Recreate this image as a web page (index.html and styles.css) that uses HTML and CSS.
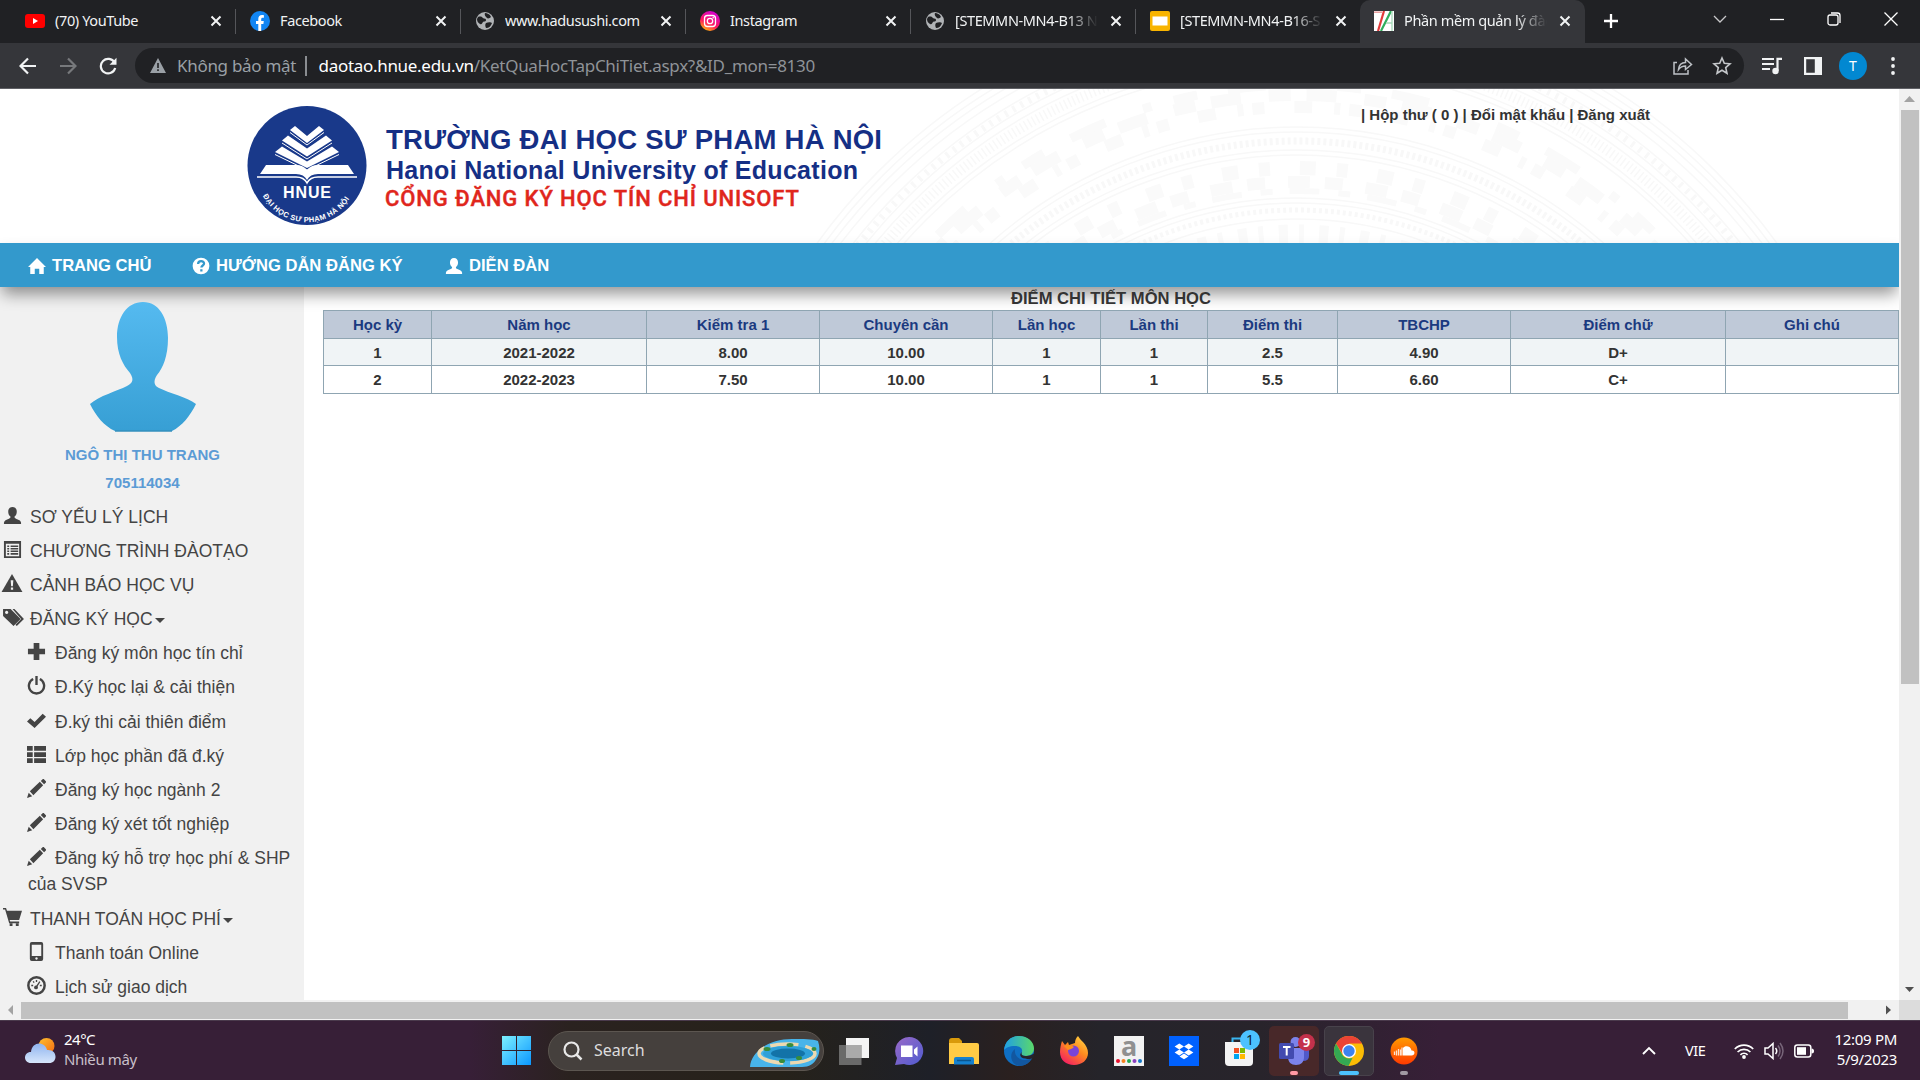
FILE: index.html
```html
<!DOCTYPE html>
<html lang="vi">
<head>
<meta charset="utf-8">
<title>Phần mềm quản lý đào tạo</title>
<link rel="stylesheet" href="styles.css">
</head>
<body>
<svg class="defs" width="0" height="0">
  <symbol id="close" viewBox="0 0 12 12"><path d="M1.5 1.5l9 9M10.500 1.500l-9 9" stroke="#f1f3f4" stroke-width="2" fill="none"/></symbol>
  <symbol id="globe" viewBox="0 0 20 20"><circle cx="10" cy="10" r="9" fill="#b0b3b6"/><path d="M3 6c3-1 4 0 5 1s3 0 3 2-2 1-3 2-1 3-3 2-3-3-3-5zM10 2c2 0 5 1 6 4-1 1-3 2-4 1s-3-3-2-5zM11 12c2-1 5-1 6 0-1 3-3 5-6 5-1-2-1-4 0-5z" fill="#202124"/></symbol>
  <symbol id="user" viewBox="0 0 20 20"><path d="M10 1c2.800 0 4.500 2 4.500 5 0 2.300-1 4.200-2.300 5.100-.3 1.200.3 1.700 1.500 2.200 2.600 1.100 5.300 2 5.300 4.200V19H1v-1.500c0-2.200 2.700-3.100 5.300-4.200 1.200-.5 1.800-1 1.500-2.200C6.500 10.200 5.500 8.300 5.500 6c0-3 1.700-5 4.500-5z"/></symbol>
  <symbol id="home" viewBox="0 0 20 20"><path d="M10 1l10 10h-2.500v8h-5v-6h-5v6h-5v-8H0z"/></symbol>
  <symbol id="question" viewBox="0 0 20 20"><circle cx="10" cy="10" r="9.300"/><path d="M6.800 7.800c0-4.300 6.600-4 6.600-.6 0 2.300-3 2.200-3 4.600M10.400 13.500v2.500" fill="none" stroke="#39c" stroke-width="2.500"/></symbol>
  <symbol id="listalt" viewBox="0 0 20 20"><path d="M1 1h18v18H1zM3 4v13h14V4z" fill-rule="evenodd"/><path d="M4.500 6.500h2m1.500 0h8M4.500 9.200h2m1.500 0h8M4.500 11.900h2m1.500 0h8M4.500 14.600h2m1.500 0h8" stroke="#444" stroke-width="1.600"/></symbol>
  <symbol id="warning" viewBox="0 0 22 20"><path d="M11 0l11 19H0z"/><path d="M9.600 6.500h2.800l-.5 6.500h-1.800zM9.800 14.200h2.400v2.300H9.800z" fill="#f1f1f1"/></symbol>
  <symbol id="tags" viewBox="0 0 24 20"><path d="M1 1h8l10.500 10.500-7.500 7.500L1 8.500zM4.800 3A1.700 1.700 0 1 0 4.810 3z" fill-rule="evenodd"/><path d="M11 1h2l10 10.500-7.500 7.500-1.500-1.500 6-6z"/></symbol>
  <symbol id="plus" viewBox="0 0 20 20"><path d="M7 1h6v6h6v6h-6v6H7v-6H1V7h6z"/></symbol>
  <symbol id="power" viewBox="0 0 20 20"><path d="M6.500 3.200a8 8 0 1 0 7 0M10 0v9.500" fill="none" stroke="#444" stroke-width="2.500"/></symbol>
  <symbol id="check" viewBox="0 0 20 20"><path d="M0 11l3.500-3.500L8 11.500 16.500 3 20 6 8 18z"/></symbol>
  <symbol id="thlist" viewBox="0 0 20 20"><path d="M0 1h6v5H0zM7.500 1H20v5H7.500zM0 7.500h6v5H0zM7.500 7.500H20v5H7.500zM0 14h6v5H0zM7.500 14H20v5H7.500z"/></symbol>
  <symbol id="pencil" viewBox="0 0 20 20"><path d="M0 20l1.800-5.500 3.700 3.700zM3 13L13.500 3 17 6.500 6.700 17zM14.500 2l1.700-1.500c.6-.6 1.300-.5 1.900 0l1.500 1.600c.6.600.6 1.300 0 1.900L18 5.500z"/></symbol>
  <symbol id="cart" viewBox="0 0 20 20"><path d="M0 0h3.200l1 3H20l-3 9.500H7l.6 1.800H17v1.700H6.500L2.200 1.700H0z"/><path d="M7 16h3v3H7zM13.500 16h3v3h-3z"/></symbol>
  <symbol id="phone" viewBox="0 0 20 20"><path d="M5 0h10q2 0 2 2v16q0 2-2 2H5q-2 0-2-2V2q0-2 2-2zM5 2.800v12h10v-12zM10 16a1.300 1.300 0 1 0 .010 0z" fill-rule="evenodd"/></symbol>
  <symbol id="gauge" viewBox="0 0 20 20"><circle cx="10" cy="10" r="8.600" fill="none" stroke="#444" stroke-width="2.600"/><path d="M4.500 10h2m7 0h2M6.500 5.700l1 1.200M10 4.300v1.900M9.500 12l4-6" stroke="#444" stroke-width="1.400"/><circle cx="9.500" cy="12" r="2"/></symbol>
</svg>

<header class="browser">
  <div class="tabs">
    <div class="tab"><svg class="fav" viewBox="0 0 20 20"><rect y="3" width="20" height="14" rx="3" fill="#f00"/><path d="M8 7l5 3-5 3z" fill="#fff"/></svg><span class="tt">(70) YouTube</span><svg class="x"><use href="#close"/></svg></div>
    <div class="tab"><svg class="fav" viewBox="0 0 20 20"><circle cx="10" cy="10" r="10" fill="#1185f3"/><path d="M8.300 20v-7H6v-3h2.300V8c0-2.600 1.500-4 3.700-4 1 0 1.900.2 1.900.2v2.500h-1.200c-1.200 0-1.500.7-1.500 1.400V10h2.600l-.4 3h-2.200v7z" fill="#fff"/></svg><span class="tt">Facebook</span><svg class="x"><use href="#close"/></svg></div>
    <div class="tab"><svg class="fav"><use href="#globe"/></svg><span class="tt">www.hadusushi.com</span><svg class="x"><use href="#close"/></svg></div>
    <div class="tab"><svg class="fav" viewBox="0 0 20 20"><defs><linearGradient id="ig" x1="0.200" y1="1" x2="0.700" y2="0"><stop offset="0" stop-color="#ffc800"/><stop offset=".4" stop-color="#ff1a5e"/><stop offset="1" stop-color="#d100d8"/></linearGradient></defs><circle cx="10" cy="10" r="10" fill="url(#ig)"/><rect x="4.500" y="4.500" width="11" height="11" rx="3" fill="none" stroke="#fff" stroke-width="1.300"/><circle cx="10" cy="10" r="2.700" fill="none" stroke="#fff" stroke-width="1.300"/><circle cx="13.200" cy="6.800" r=".8" fill="#fff"/></svg><span class="tt">Instagram</span><svg class="x"><use href="#close"/></svg></div>
    <div class="tab"><svg class="fav"><use href="#globe"/></svg><span class="tt fade">[STEMMN-MN4-B13 N</span><svg class="x"><use href="#close"/></svg></div>
    <div class="tab last"><svg class="fav" viewBox="0 0 20 20"><rect width="20" height="20" rx="2" fill="#f8b400"/><rect x="2.500" y="5.500" width="15" height="9" fill="#fff"/></svg><span class="tt fade">[STEMMN-MN4-B16-S</span><svg class="x"><use href="#close"/></svg></div>
    <div class="tab active"><svg class="fav" viewBox="0 0 20 20"><rect width="20" height="20" fill="#fff"/><path d="M0 1.200h8" stroke="#e9a0a0" stroke-width="1.500"/><path d="M10 0L4 20" fill="none" stroke="#e23b3b" stroke-width="2.200"/><path d="M17 0L7 20" stroke="#2fae5c" stroke-width="2.200"/><path d="M18 0v20M12 12h6" fill="none" stroke="#a5d9b7" stroke-width="1.300"/></svg><span class="tt fade">Phần mềm quản lý đào</span><svg class="x"><use href="#close"/></svg></div>
    <svg class="newtab" viewBox="0 0 16 16"><path d="M8 1v14M1 8h14" stroke="#fff" stroke-width="2.300"/></svg>
    <div class="winctl">
      <svg width="14" height="14" viewBox="0 0 14 14"><path d="M1 4l6 6 6-6" stroke="#c8c8ca"/></svg>
      <svg width="14" height="14" viewBox="0 0 14 14"><path d="M0 7.500h14"/></svg>
      <svg width="14" height="14" viewBox="0 0 14 14"><rect x="1" y="3" width="10" height="10" rx="2"/><path d="M4 1h6.500q2.500 0 2.500 2.500V11"/></svg>
      <svg width="14" height="14" viewBox="0 0 14 14"><path d="M.5.500l13 13M13.500.500l-13 13"/></svg>
    </div>
  </div>
  <div class="toolbar">
    <svg class="nv" viewBox="0 0 18 18"><path d="M17 9H2M9 1.500L1.500 9 9 16.500" stroke="#f1f3f4"/></svg>
    <svg class="nv" viewBox="0 0 18 18"><path d="M1 9h15M9 1.500L16.500 9 9 16.500" stroke="#77797c"/></svg>
    <svg class="nv" viewBox="0 0 18 18"><path d="M15.500 5.500A7.300 7.300 0 1 0 16.200 11" stroke="#f1f3f4"/><path d="M17.500.800v7h-7z" fill="#f1f3f4"/></svg>
    <div class="omni">
      <svg width="16" height="15" viewBox="0 0 16 15"><path d="M8 0l8 15H0z" fill="#9aa0a6"/><path d="M7.200 5h1.600v5H7.200zM7.200 11.300h1.600v1.700H7.200z" fill="#202124"/></svg>
      <span class="warn">Không bảo mật</span><i class="bar"></i><span class="url"><b>daotao.hnue.edu.vn</b>/KetQuaHocTapChiTiet.aspx?&amp;ID_mon=8130</span>
      <svg class="share" width="20" height="19" viewBox="0 0 20 19"><path d="M4 6.500H1V18h14v-4M5.500 13.500c.5-5 3-7 7-7V3l6 5.500-6 5v-3.500c-3 0-5 .8-7 3.500z" fill="none" stroke="#bdc1c6" stroke-width="1.500"/></svg>
      <svg class="star" width="20" height="19" viewBox="0 0 20 19"><path d="M10 2l2.300 5.300 5.700.5-4.300 3.800 1.300 5.700-5-3-5 3 1.300-5.700L2 7.800l5.700-.5z" fill="none" stroke="#c4c7ca" stroke-width="1.600"/></svg>
    </div>
    <svg class="media" width="20" height="18" viewBox="0 0 20 18"><path d="M0 2h12M0 7h12M0 12h8" stroke="#f1f3f4" stroke-width="2.200"/><path d="M15.500 14V1.800H20" stroke="#f1f3f4" stroke-width="2.200" fill="none"/><circle cx="13.500" cy="14" r="3.200" fill="#f1f3f4"/></svg>
    <svg class="panel" width="18" height="18" viewBox="0 0 18 18"><path d="M0 0h18v18H0zM2.200 2.200v13.600h8.600V2.200z" fill="#f1f3f4" fill-rule="evenodd"/></svg>
    <span class="ava">T</span>
    <svg class="dots" width="4" height="18" viewBox="0 0 4 18"><circle cx="2" cy="2" r="1.900"/><circle cx="2" cy="9" r="1.900"/><circle cx="2" cy="16" r="1.900"/></svg>
  </div>
</header>

<div class="view">
  <main class="page">
    <div class="banner">
      <svg width="1899" height="154" viewBox="0 89 1899 154">
        <g transform="translate(1297 590)" fill="none" stroke="#f8f8f8" stroke-width="1.500">
          <circle r="592"/><circle r="586"/><circle r="580"/><circle r="573"/>
          <circle r="563"/><circle r="558" stroke-width="7" stroke-dasharray="3 6"/><circle r="553"/><circle r="546"/>
          <circle r="538" stroke-width="10" stroke-dasharray="1.500 3"/><circle r="529"/><circle r="524"/>
          <g stroke="#fafafa">
            <circle r="505" stroke-width="9" stroke-dasharray="38 40 9 23 24 31"/>
            <circle r="495" stroke-width="12" stroke-dasharray="22 16 30 28"/>
            <circle r="483" stroke-width="12" stroke-dasharray="12 30 18 22 6 9"/>
          </g>
          <circle r="463"/><circle r="458"/><circle r="449" stroke-width="7" stroke-dasharray="3 3"/><circle r="440"/><circle r="435"/>
          <g stroke="#fafafa">
            <circle r="422" stroke-width="14" stroke-dasharray="11 30 16 21"/>
            <circle r="408" stroke-width="12" stroke-dasharray="18 23 22 15"/>
            <circle r="399" stroke-width="6" stroke-dasharray="30 19 12 17"/>
          </g>
          <circle r="392"/><circle r="387"/><circle r="380" stroke-width="5" stroke-dasharray="3 3"/><circle r="371"/>
          <circle r="352" stroke="#fafafa" stroke-width="27" stroke-dasharray="9 11 5 15"/>
        </g>
        <circle cx="307" cy="165.500" r="59.500" fill="#19398a"/>
        <g fill="#fff">
          <path d="M290 130l5-4 12 10 12-10 5 4-17 13z"/>
          <path d="M282 140.500l6-5 19 13 19-13 6 5-25 16z"/>
          <path d="M275 152l7-5.500 25 15 25-15 7 5.500-32 16z"/>
          <path d="M266 165h30q7 0 11 5 4-5 11-5h30l6 9h-36q-8 0-11 6-3-6-11-6h-36z"/>
        </g>
        <g fill="none" stroke="#fff" stroke-width="1">
          <path d="M290 132.500l17 12.500 17-12.500M282 143l25 16 25-16M275 154.500l32 15.500 32-15.500"/>
          <path d="M257 177h39q8 0 11 6 3-6 11-6h39" stroke-width="1.500"/>
        </g>
        <text x="283" y="198" class="hnue" textLength="48">HNUE</text>
        <path id="arc" d="M262.500 195a50 50 0 0 0 90-2" fill="none"/>
        <text class="ring"><textPath href="#arc" startOffset="1" textLength="104">ĐẠI HỌC SƯ PHẠM HÀ NỘI</textPath></text>
        <text x="386" y="149" class="l1" textLength="496">TRƯỜNG ĐẠI HỌC SƯ PHẠM HÀ NỘI</text>
        <text x="386" y="179" class="l2" textLength="472">Hanoi National University of Education</text>
        <text x="385" y="206" class="l3" textLength="414">CỔNG ĐĂNG KÝ HỌC TÍN CHỈ UNISOFT</text>
        <text x="1361" y="120" class="l4" textLength="289">| Hộp thư ( 0 ) | Đổi mật khẩu | Đăng xuất</text>
      </svg>
    </div>
    <nav class="menu">
      <a><svg><use href="#home"/></svg><span class="m1">TRANG CHỦ</span></a>
      <a><svg><use href="#question"/></svg><span class="m2">HƯỚNG DẪN ĐĂNG KÝ</span></a>
      <a><svg><use href="#user"/></svg><span class="m3">DIỄN ĐÀN</span></a>
    </nav>
    <div class="cols">
      <aside class="side">
        <svg class="avatar" width="108" height="134" viewBox="89 300 108 134"><defs><linearGradient id="av" x1="0" y1="0" x2="0" y2="1"><stop offset="0" stop-color="#55baf0"/><stop offset="1" stop-color="#379fd4"/></linearGradient></defs><path d="M143 302c16 0 25 16 25 36 0 18-5 30-11 37-4 6-3 11 2 13 10 5 28 9 37 16-6 12-14 22-24 27h-57c-11-5-19-15-25-27 9-8 27-13 37-18 6-3 7-7 3-13-7-8-13-19-13-36 0-20 10-35 26-35z" fill="url(#av)"/><path d="M115 431h57" stroke="#348fbd" stroke-width="1.500"/></svg>
        <p class="who">NGÔ THỊ THU TRANG</p>
        <p class="who">705114034</p>
        <ul class="list">
          <li><svg><use href="#user"/></svg>SƠ YẾU LÝ LỊCH</li>
          <li><svg><use href="#listalt"/></svg>CHƯƠNG TRÌNH ĐÀOTẠO</li>
          <li><svg class="tri"><use href="#warning"/></svg>CẢNH BÁO HỌC VỤ</li>
          <li><svg class="wide"><use href="#tags"/></svg>ĐĂNG KÝ HỌC<i class="caret"></i></li>
          <li class="sub"><svg><use href="#plus"/></svg>Đăng ký môn học tín chỉ</li>
          <li class="sub"><svg><use href="#power"/></svg>Đ.Ký học lại &amp; cải thiện</li>
          <li class="sub"><svg><use href="#check"/></svg>Đ.ký thi cải thiên điểm</li>
          <li class="sub"><svg><use href="#thlist"/></svg>Lớp học phần đã đ.ký</li>
          <li class="sub"><svg><use href="#pencil"/></svg>Đăng ký học ngành 2</li>
          <li class="sub"><svg><use href="#pencil"/></svg>Đăng ký xét tốt nghiệp</li>
          <li class="sub"><svg><use href="#pencil"/></svg>Đăng ký hỗ trợ học phí &amp; SHP<span class="wrap">của SVSP</span></li>
          <li><svg><use href="#cart"/></svg>THANH TOÁN HỌC PHÍ<i class="caret"></i></li>
          <li class="sub"><svg><use href="#phone"/></svg>Thanh toán Online</li>
          <li class="sub"><svg><use href="#gauge"/></svg>Lịch sử giao dịch</li>
        </ul>
      </aside>
      <section class="content">
        <h1>ĐIỂM CHI TIẾT MÔN HỌC</h1>
        <table>
          <colgroup><col class="c108"><col class="c215"><col class="c173"><col class="c173"><col class="c108"><col class="c107"><col class="c130"><col class="c173"><col class="c215"><col class="c173"></colgroup>
          <tr><th>Học kỳ</th><th>Năm học</th><th>Kiểm tra 1</th><th>Chuyên cần</th><th>Lần học</th><th>Lần thi</th><th>Điểm thi</th><th>TBCHP</th><th>Điểm chữ</th><th>Ghi chú</th></tr>
          <tr class="alt"><td>1</td><td>2021-2022</td><td>8.00</td><td>10.00</td><td>1</td><td>1</td><td>2.5</td><td>4.90</td><td>D+</td><td></td></tr>
          <tr><td>2</td><td>2022-2023</td><td>7.50</td><td>10.00</td><td>1</td><td>1</td><td>5.5</td><td>6.60</td><td>C+</td><td></td></tr>
        </table>
      </section>
    </div>
  </main>
  <div class="vs"><svg width="21" height="21"><path d="M5 13l5.500-6 5.500 6z" fill="#a3a3a3"/></svg><i class="vthumb"></i><svg class="dn" width="21" height="21"><path d="M6 8h9l-4.500 5z" fill="#505050"/></svg></div>
  <div class="hs"><svg width="21" height="20"><path d="M13 5v10l-5-5z" fill="#a3a3a3"/></svg><i class="hthumb"></i><svg class="rt" width="21" height="20"><path d="M8 5.500v9l5-4.500z" fill="#505050"/></svg></div>
  <div class="corner"></div>
</div>

<footer class="task">
  <div class="weather">
    <svg width="31" height="27" viewBox="0 0 31 27"><defs><linearGradient id="cl" x1="0" y1="0" x2="0" y2="1"><stop offset="0" stop-color="#8fb4ef"/><stop offset="1" stop-color="#d7e6fb"/></linearGradient><linearGradient id="su" x1="0" y1="0" x2="1" y2="1"><stop offset="0" stop-color="#ffc02e"/><stop offset="1" stop-color="#f26b12"/></linearGradient></defs><circle cx="21.500" cy="9" r="8" fill="url(#su)"/><path d="M6 26c-8 0-8-11 0-11C7 4 20 4 22 13c11-1 11 13 2 13z" fill="url(#cl)"/></svg>
    <div class="wtext"><span class="deg">24°C</span><span class="cloudy">Nhiều mây</span></div>
  </div>
  <svg class="win" width="30" height="30" viewBox="0 0 30 30"><defs><linearGradient id="w" x1="0" y1="0" x2="1" y2="1"><stop offset="0" stop-color="#7df0ff"/><stop offset="1" stop-color="#0b97ff"/></linearGradient></defs><path d="M0 0h14v14H0zM15 0h14v14H15zM0 15h14v14H0zM15 15h14v14H15z" fill="url(#w)"/></svg>
  <div class="search">
    <svg width="20" height="20" viewBox="0 0 20 20"><circle cx="8.500" cy="8.500" r="7" fill="none" stroke="#e8e8e8" stroke-width="2.200"/><path d="M13.500 13.500l5 5" stroke="#e8e8e8" stroke-width="2.500"/></svg>
    <span>Search</span>
    <svg class="isle" width="70" height="28" viewBox="0 0 70 28"><path d="M0 28C1 12 20 0 42 0c12 0 20 0 26 2 2 6 2 12-1 17-3 6-8 9-15 9z" fill="#48b4ea"/><ellipse cx="37" cy="14.500" rx="28" ry="9.500" fill="none" stroke="#ecd9b0" stroke-width="3.500" stroke-dasharray="28 7 36 6"/><ellipse cx="38" cy="14.500" rx="25" ry="7.500" fill="#2fa0d8"/><ellipse cx="38" cy="14.500" rx="17" ry="5" fill="#1373a8"/><g fill="#388c3c"><ellipse cx="17" cy="10" rx="3.500" ry="2"/><ellipse cx="40" cy="6" rx="3.500" ry="2"/><ellipse cx="64" cy="10" rx="2.500" ry="2"/><ellipse cx="49" cy="19" rx="3" ry="2"/><ellipse cx="32" cy="22" rx="3" ry="2"/></g></svg>
  </div>
  <div class="apps">
    <div class="app"><svg viewBox="0 0 30 30"><rect x="7" y="2" width="23" height="20" fill="#f4f4f4"/><rect y="9" width="22.500" height="20" fill="#777" opacity=".85"/><rect x="7" y="9" width="15.500" height="13" fill="#aaa"/></svg></div>
    <div class="app"><svg viewBox="0 0 30 30"><defs><linearGradient id="ct" x1="0" y1="0" x2="1" y2="1"><stop offset="0" stop-color="#9a6ac8"/><stop offset="1" stop-color="#4f5bd0"/></linearGradient></defs><path d="M15 1a14 14 0 1 1-5 27l-9 1 2-7A14 14 0 0 1 15 1z" fill="url(#ct)"/><path d="M7 9.500h11.500v11.500H7zM20 13.500l3.500-3v10l-3.500-3z" fill="#fff"/></svg></div>
    <div class="app"><svg viewBox="0 0 30 30"><path d="M0 5q0-3 3-3h7l3 3v5H0z" fill="#d99a0b"/><path d="M0 7h28q2 0 2 2v19H0z" fill="#ffcb45"/><path d="M5 28.500V23q0-2 2-2h16q2 0 2 2v5.500z" fill="#1581d0"/><path d="M8 24.500h14" stroke="#0b568f" stroke-width="1.500"/></svg></div>
    <div class="app"><svg viewBox="0 0 30 30"><defs><linearGradient id="ed"><stop offset="0" stop-color="#1f9ee5"/><stop offset="1" stop-color="#5bd96a"/></linearGradient></defs><circle cx="15" cy="15" r="15" fill="#0f6fc4"/><path d="M0 14C1 5 7 0 15 0c9 0 15 6 15 12.500 0 5-4 7.500-8 7.500-5 0-5-2-4-4 1-4-3-6-7-6-6 0-9 2-11 4z" fill="url(#ed)"/><path d="M11 13c-1 7 4 11 10 11 3 0 5-1 7-2.500-2 5-7 8.500-13 8.500-9-2-10-13-4-17z" fill="#1257a0"/><path d="M18 16c-1 2-1 4 4 4 3 0 5-.5 9-3l-1.500 5c-3 1-5 1.500-8 .5-5 0-7-4-3.500-6.500z" fill="#26242a"/></svg></div>
    <div class="app"><svg viewBox="0 0 30 30"><defs><linearGradient id="ff" x1="1" y1="0" x2="0.300" y2="1"><stop offset="0" stop-color="#ffe34a"/><stop offset=".5" stop-color="#ff8a1f"/><stop offset="1" stop-color="#f4235f"/></linearGradient></defs><path d="M3 5l3 4 3-3 1 3 6-2c0-3 1-5 3-7 2 3 3 4 5 6 3 3 5 7 5 11 0 7-6 12-14 12S1 24 1 16c0-4 1-8 2-11z" fill="url(#ff)"/><circle cx="14.500" cy="15" r="5.500" fill="#7a44d8"/><path d="M5 10c3-2 8-1 10 1-2 2-4 2-6 3z" fill="#ff8f1c"/></svg></div>
    <div class="app"><svg viewBox="0 0 30 30"><rect width="30" height="30" fill="#f2f2f2"/><text x="15" y="19.500" text-anchor="middle" class="aa">a</text><g><circle cx="4" cy="25" r="2" fill="#e8112d"/><circle cx="9.500" cy="25" r="2" fill="#f58220"/><circle cx="15" cy="25" r="2" fill="#22a850"/><circle cx="20.500" cy="25" r="2" fill="#8a3fc0"/><circle cx="26" cy="25" r="2" fill="#1578c8"/></g></svg></div>
    <div class="app"><svg viewBox="0 0 30 30"><rect width="30" height="30" fill="#0061fe"/><path d="M10.300 7.500l4.700 3-4.700 3-4.700-3zM19.700 7.500l4.700 3-4.700 3-4.700-3zM10.300 13.500l4.700 3-4.700 3-4.700-3zM19.700 13.500l4.700 3-4.700 3-4.700-3zM15 17.500l4.500 3-4.500 2.800-4.500-2.800z" fill="#fff"/></svg></div>
    <div class="app"><svg viewBox="0 0 30 30"><path d="M8.500 7V2.500H20" fill="none" stroke="#39b5f0" stroke-width="2"/><path d="M1 6h28v20q0 4-4 4H5q-4 0-4-4z" fill="#f3f3f3"/><path d="M10 12h5v5h-5z" fill="#f25022"/><path d="M16 12h5v5h-5z" fill="#7fba00"/><path d="M10 18h5v5h-5z" fill="#00a4ef"/><path d="M16 18h5v5h-5z" fill="#ffb900"/></svg><span class="badge one">1</span></div>
    <div class="app red"><svg viewBox="0 0 30 30"><circle cx="16.500" cy="6" r="5" fill="#7b83eb"/><circle cx="26" cy="8" r="3.500" fill="#5059c9"/><path d="M20 12h10v8q0 5-6 5z" fill="#5059c9"/><path d="M9 12h16v9c0 5-3 8-8 8s-8-3-8-8z" fill="#7b83eb"/><rect y="7" width="15" height="16" rx="1.500" fill="#434bb0"/><path d="M4 11h7.500M7.700 11v8.500" stroke="#fff" stroke-width="2"/></svg><span class="badge nine">9</span><i class="mark pink"></i></div>
    <div class="app on"><svg viewBox="0 0 30 30"><circle cx="15" cy="15" r="15" fill="#fbbc05"/><path d="M2 7.500A15 15 0 0 1 28 7.500H15L9 18.500z" fill="#ea4335"/><path d="M2 7.500L8.500 19q3 4.500 10 3L14.500 30A15 15 0 0 1 2 7.500z" fill="#34a853"/><circle cx="15" cy="15" r="7" fill="#fff"/><circle cx="15" cy="15" r="5.700" fill="#3b82f0"/></svg><i class="mark blue"></i></div>
    <div class="app"><svg viewBox="0 0 30 30"><defs><linearGradient id="sc" x1="0" y1="0" x2="0" y2="1"><stop offset="0" stop-color="#ff9a00"/><stop offset="1" stop-color="#ff3a00"/></linearGradient></defs><circle cx="15" cy="15" r="13.500" fill="url(#sc)"/><path d="M14 19.500V12c2-3 8-2 8.500 2.500 4-.5 4 5 0 5z" fill="#fff"/><path d="M5.500 15.500v3.500M7.500 14.500v5M9.500 13v6.500M11.500 13.500v6M13 11.500v8" stroke="#ffe3cf" stroke-width="1.300"/></svg><i class="mark grey"></i></div>
  </div>
  <div class="tray">
    <svg width="14" height="9" viewBox="0 0 14 9"><path d="M1 8l6-6 6 6" fill="none" stroke="#fff" stroke-width="1.900"/></svg>
    <span class="vie">VIE</span>
    <svg class="wifi" width="20" height="16" viewBox="0 0 20 16"><g fill="none" stroke="#fff" stroke-width="1.700"><path d="M.8 6a13 13 0 0 1 18.400 0"/><path d="M3.600 9a9 9 0 0 1 12.800 0"/><path d="M6.400 11.800a5 5 0 0 1 7.200 0"/></g><circle cx="10" cy="14" r="1.900" fill="#fff"/></svg>
    <svg class="vol" width="20" height="18" viewBox="0 0 20 18"><path d="M1 6h3l5-4.500v15L4 12H1zM11.500 6q2.500 3 0 6" fill="none" stroke="#fff" stroke-width="1.500"/><path d="M14 3.500q4 5.500 0 11M16 1q6 8 0 16" fill="none" stroke="#776579" stroke-width="1.500"/></svg>
    <svg class="bat" width="20" height="14" viewBox="0 0 20 14"><rect x=".8" y="1" width="16" height="12" rx="2.500" fill="none" stroke="#fff" stroke-width="1.500"/><rect x="3" y="3.200" width="9" height="7.600" fill="#fff"/><path d="M17.500 4.500q2.500 0 2.500 2.500t-2.500 2.500z" fill="#fff"/></svg>
    <div class="clock"><span>12:09 PM</span><span>5/9/2023</span></div>
  </div>
</footer>
</body>
</html>
```
FILE: styles.css
```css
* { box-sizing: border-box; }
body { margin: 0; width: 1920px; height: 1080px; overflow: hidden; display: flex; flex-direction: column; background: #fff; font-family: "Liberation Sans", Arial, sans-serif; }
.defs { display: none; }
svg { display: block; flex: none; }

.browser { height: 89px; flex: none; font-family: "Noto Sans", sans-serif; background: #35363a; border-bottom: 1px solid #5f6065; }
.tabs { height: 43px; display: flex; background: #202124; padding-left: 11px; }
.tab { width: 225px; height: 43px; padding: 0 14px 2px 14px; display: flex; align-items: center; color: #f1f3f4; position: relative; }
.tab::after { content: ""; position: absolute; right: 0; top: 9px; width: 1px; height: 25px; background: #55565a; }
.tab.last::after, .tab.active::after { display: none; }
.tab.active { background: #35363a; border-radius: 10px 10px 0 0; margin-left: -1px; }
.fav { width: 20px; height: 20px; }
.tt { width: 143px; margin: -2px 0 0 10px; font-size: 14.5px; letter-spacing: -0.38px; white-space: nowrap; overflow: hidden; }
.fade { -webkit-mask-image: linear-gradient(90deg, #000 78%, transparent 100%); mask-image: linear-gradient(90deg, #000 78%, transparent 100%); }
.x { width: 12px; height: 12px; margin-left: 12px; }
.newtab { width: 16px; height: 16px; margin: 13px 0 0 18px; }
.winctl { display: flex; gap: 43px; margin: 12px 0 0 94px; fill: none; stroke: #fff; stroke-width: 1.3; }
.toolbar { height: 45px; display: flex; align-items: center; padding-left: 19px; }
.nv { width: 18px; height: 18px; margin-right: 22px; fill: none; stroke-width: 2.2; }
.omni { width: 1609px; height: 35px; margin-left: -4px; padding-left: 15px; border-radius: 18px; background: #202124; display: flex; align-items: center; font-size: 17px; white-space: nowrap; }
.warn { width: 119px; margin-left: 11px; color: #9aa0a6; letter-spacing: -0.3px; }
.bar { width: 1.5px; height: 20px; margin: 0 12px 0 9px; background: #8a8d91; }
.url { width: 497px; color: #8f9398; letter-spacing: -0.3px; }
.url b { font-weight: 400; color: #fff; }
.share { margin-left: 857px; }
.star { margin-left: 19px; }
.media { margin-left: 18px; }
.panel { margin-left: 22px; }
.ava { width: 28px; height: 28px; margin-left: 17px; border-radius: 50%; background: #0288d1; color: #fff; font-size: 14px; line-height: 28px; text-align: center; }
.dots { margin-left: 24px; fill: #f1f3f4; }

.view { height: 931px; flex: none; display: grid; grid-template: 911px 20px / 1899px 21px; }
.page { overflow: hidden; background: #fff; }
.banner { height: 154px; }
.hnue { font: bold 16px "Liberation Sans", Arial, sans-serif; fill: #fff; }
.ring { font: bold 7.5px "Liberation Sans", Arial, sans-serif; fill: #fff; }
.l1 { font: bold 27.5px "Liberation Sans", Arial, sans-serif; fill: #152f85; }
.l2 { font: bold 25px "Liberation Sans", Arial, sans-serif; fill: #152f85; }
.l3 { font: 500 22px Roboto, Arial, sans-serif; fill: #e0261c; stroke: #e0261c; stroke-width: .4px; }
.l4 { font: bold 15px "Liberation Sans", Arial, sans-serif; fill: #333; }
.menu { height: 44px; padding: 1px 0 0 28px; display: flex; align-items: center; background: #39c; box-shadow: 0 9px 16px -2px rgba(0, 0, 0, .42); position: relative; color: #fff; font-weight: bold; font-size: 16.6px; white-space: nowrap; }
.menu a { display: flex; align-items: center; gap: 6px; }
.menu svg { width: 18px; height: 18px; fill: #fff; }
.m1 { width: 140px; }
.m2 { width: 229px; }
.cols { display: flex; height: 713px; }
.side { width: 304px; background: #f1f1f1; padding-top: 13px; }
.avatar { margin-left: 89px; position: relative; }
.who { margin: 0; width: 285px; text-align: center; font-weight: bold; font-size: 15px; line-height: 28px; color: #5b9bd5; }
.avatar + .who { padding-top: 7px; }
.list { list-style: none; margin: 3px 0 0; padding: 0; font-size: 17.5px; color: #444; white-space: nowrap; }
.list li { line-height: 34.1px; padding-left: 30px; position: relative; }
.list li.sub { padding-left: 55px; }
.list svg { position: absolute; left: 3px; top: 6px; width: 19px; height: 19px; fill: #444; }
.list svg.wide { width: 23px; left: 2px; }
.list svg.tri { width: 22px; left: 1px; }
.list .sub svg { left: 27px; }
.wrap { display: block; line-height: 27px; margin: -4px 0 4px -27px; }
.caret { display: inline-block; border: 5px solid transparent; border-top-color: #444; border-bottom: 0; margin-left: 2px; vertical-align: 2px; }
.content { width: 1595px; padding-left: 19px; }
.content h1 { margin: 0; font-size: 16.6px; line-height: 23px; text-align: center; color: #333; position: relative; }
table { width: 1576px; table-layout: fixed; border-collapse: collapse; font-size: 15px; font-weight: bold; color: #333; position: relative; }
th, td { border: 1px solid #8fa5b2; padding: 0; text-align: center; }
th { height: 28px; background: #bfc9d8; color: #1b3a80; }
td { height: 28px; background: #fff; }
.alt td { height: 27px; background: #f0f4f6; }
.c108 { width: 108px; }
.c107 { width: 107px; }
.c130 { width: 130px; }
.c173 { width: 173px; }
.c215 { width: 215px; }

.vs { background: #f1f1f1; display: flex; flex-direction: column; }
.vthumb { width: 18px; height: 574px; margin-left: 2px; background: #c1c1c1; }
.dn { margin-top: auto; }
.hs { background: #f1f1f1; display: flex; }
.hthumb { width: 1827px; height: 17px; margin-top: 2px; background: #c1c1c1; }
.rt { margin-left: auto; }
.corner { background: #dcdcdc; }

.task { height: 60px; flex: none; display: flex; align-items: center; border-top: 1px solid #4a3a4c; background: linear-gradient(90deg, #371f37 0, #371f37 470px, #2a221f 570px, #26221a 780px, #1e2028 930px, #2a201f 1010px, #25242a 1100px, #28242b 1260px, #371f37 1440px); color: #fff; font-family: "Noto Sans", sans-serif; }
.weather { width: 502px; padding-left: 25px; display: flex; align-items: center; gap: 8px; font-size: 15px; line-height: 20px; }
.wtext { margin-top: -3px; }
.weather span { display: block; }
.deg { letter-spacing: -0.5px; }
.cloudy { color: #c9c0ca; letter-spacing: -0.4px; }
.search { width: 276px; height: 40px; margin-left: 16px; padding-left: 14px; border: 1px solid #5c5650; border-radius: 20px; background: #45403d; display: flex; align-items: center; font-size: 16px; color: #ddd; }
.search span { width: 52px; margin: -1px 0 0 11px; }
.isle { margin: 4px 0 0 104px; }
.apps { display: flex; gap: 5px; margin-left: 5px; }
.app { width: 50px; height: 50px; padding: 10px; position: relative; border-radius: 5px; }
.app svg { width: 30px; height: 30px; }
.app.red { background: #482829; }
.app.on { background: #3a343d; border: 1px solid #48424b; padding: 9px; }
.aa { font: bold 27px "Noto Sans", sans-serif; fill: #909090; }
.badge { position: absolute; border-radius: 50%; text-align: center; }
.one { left: 26px; top: 4px; width: 20px; height: 20px; background: #4cc2ff; color: #123; font-size: 14px; line-height: 19px; }
.nine { left: 29px; top: 8px; width: 17px; height: 17px; background: #c4314b; font-size: 13px; font-weight: bold; line-height: 16px; }
.mark { position: absolute; bottom: 1px; left: 21px; width: 8px; height: 4px; border-radius: 2px; }
.pink { background: #ff99a4; }
.blue { background: #4cc2ff; left: 14px; width: 20px; bottom: 0; }
.grey { background: #a19aa3; }
.tray { display: flex; align-items: center; margin-left: 213px; }
.vie { margin: -2px 0 0 29px; width: 22px; font-size: 14.5px; letter-spacing: -0.4px; }
.wifi { margin-left: 27px; }
.vol, .bat { margin-left: 10px; }
.clock { width: 83px; margin-top: -3px; text-align: right; font-size: 15px; line-height: 20px; letter-spacing: -0.3px; }
.clock span { display: block; white-space: nowrap; }
```
